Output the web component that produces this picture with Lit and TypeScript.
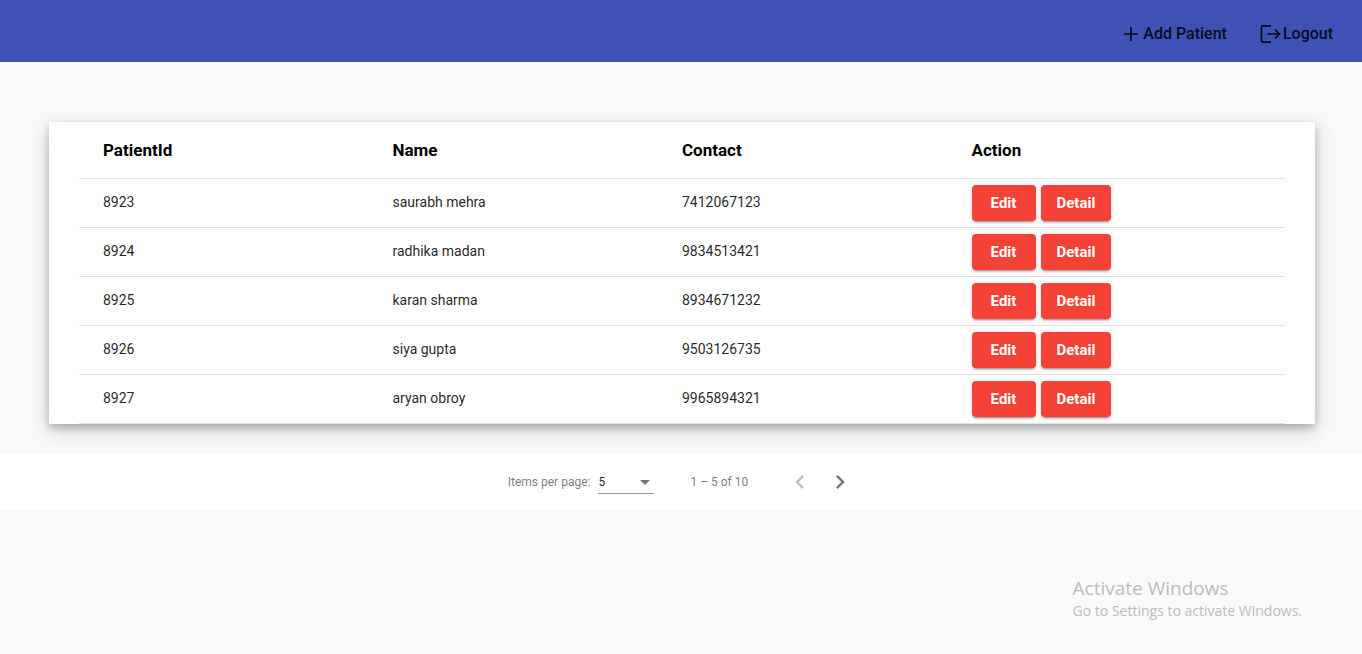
import { LitElement, html, css, svg } from "lit";
import { customElement, state } from "lit/decorators.js";

interface Patient {
  id: number;
  name: string;
  contact: string;
}

const PATIENTS: Patient[] = [
  { id: 8923, name: "saurabh mehra", contact: "7412067123" },
  { id: 8924, name: "radhika madan", contact: "9834513421" },
  { id: 8925, name: "karan sharma", contact: "8934671232" },
  { id: 8926, name: "siya gupta", contact: "9503126735" },
  { id: 8927, name: "aryan obroy", contact: "9965894321" },
];

const icon = (cls: string, box: string, body: unknown) =>
  html`<svg class=${cls} viewBox=${box} aria-hidden="true">${body}</svg>`;

@customElement("patient-toolbar")
export class PatientToolbar extends LitElement {
  static styles = css`
    :host {
      display: block;
    }
    .bar {
      display: flex;
      justify-content: flex-end;
      align-items: center;
      gap: 32px;
      height: 62px;
      padding: 6px 29px 0 16px;
      box-sizing: border-box;
      background: #3f51b5;
    }
    .item {
      display: flex;
      align-items: center;
      padding: 0;
      border: 0;
      background: none;
      color: rgba(0, 0, 0, 0.87);
      font: 500 16px/24px Roboto, sans-serif;
      cursor: pointer;
    }
    .icon {
      width: 24px;
      height: 24px;
      fill: none;
      stroke: currentColor;
      stroke-width: 1.7;
    }
  `;

  render() {
    return html`
      <header class="bar">
        <button class="item" type="button">
          ${icon("icon", "0 0 24 24", svg`<path d="M5 12h14M12 5v14" />`)}Add Patient
        </button>
        <button class="item" type="button">
          ${icon(
            "icon",
            "0 0 24 24",
            svg`<path d="M12 3.800H4Q2.500 3.800 2.500 5.300v13.400q0 1.500 1.500 1.500H12M8.500 12H20.500M16 7.500l4.500 4.500-4.500 4.500" />`
          )}Logout
        </button>
      </header>
    `;
  }
}

@customElement("patient-table")
export class PatientTable extends LitElement {
  static styles = css`
    :host {
      display: block;
      padding: 0 30px;
      background: #fff;
      box-shadow: 0 4px 8px 0 rgba(0, 0, 0, 0.2), 0 6px 20px 0 rgba(0, 0, 0, 0.19);
    }
    .table {
      width: 100%;
      table-layout: fixed;
      border-spacing: 0;
      font: 14px/20px Roboto, sans-serif;
      color: rgba(0, 0, 0, 0.87);
    }
    .cell,
    .head {
      box-sizing: border-box;
      padding: 0;
      border-bottom: 1px solid #e0e0e0;
      text-align: left;
    }
    .head {
      height: 57px;
      color: #000;
      font-size: 17px;
      font-weight: 700;
    }
    .cell {
      height: 49px;
      padding-bottom: 2px;
      font-weight: 400;
    }
    .cell.controls {
      padding-bottom: 0;
    }
    .edge {
      width: 24px;
    }
    .actions {
      display: flex;
      gap: 5px;
    }
    .button {
      min-width: 64px;
      height: 36px;
      padding: 0 16px;
      border: 0;
      border-radius: 4px;
      background: #f44336;
      color: #fff;
      font: 700 15px/36px Roboto, sans-serif;
      box-shadow: 0 3px 1px -2px rgba(0, 0, 0, 0.2), 0 2px 2px 0 rgba(0, 0, 0, 0.14),
        0 1px 5px 0 rgba(0, 0, 0, 0.12);
      cursor: pointer;
    }
  `;

  render() {
    return html`
      <table class="table">
        <colgroup>
          <col class="edge" />
          <col /><col /><col /><col />
          <col class="edge" />
        </colgroup>
        <thead>
          <tr>
            <td class="head"></td>
            ${["PatientId", "Name", "Contact", "Action"].map(
              (title) => html`<th class="head" scope="col">${title}</th>`
            )}
            <td class="head"></td>
          </tr>
        </thead>
        <tbody>
          ${PATIENTS.map(
            (p) => html`
              <tr>
                <td class="cell"></td>
                <td class="cell">${p.id}</td>
                <td class="cell">${p.name}</td>
                <td class="cell">${p.contact}</td>
                <td class="cell controls">
                  <div class="actions">
                    <button class="button" type="button">Edit</button>
                    <button class="button" type="button">Detail</button>
                  </div>
                </td>
                <td class="cell"></td>
              </tr>
            `
          )}
        </tbody>
      </table>
    `;
  }
}

@customElement("page-controls")
export class PageControls extends LitElement {
  @state() private size = "5";

  static styles = css`
    :host {
      display: block;
    }
    .pager {
      display: flex;
      justify-content: center;
      align-items: center;
      height: 56px;
      padding-left: 6px;
      background: #fff;
      color: rgba(0, 0, 0, 0.54);
      font: 12px/20px Roboto, sans-serif;
    }
    .size {
      display: grid;
      align-items: center;
      width: 56px;
      margin: 0 36px 0 8px;
      border-bottom: 1px solid rgba(0, 0, 0, 0.42);
      padding-top: 1px;
    }
    .select {
      grid-area: 1 / 1;
      width: 100%;
      height: 22px;
      padding: 0;
      border: 0;
      appearance: none;
      background: none;
      color: rgba(0, 0, 0, 0.87);
      font: 12px/22px Roboto, sans-serif;
    }
    .arrow {
      grid-area: 1 / 1;
      justify-self: end;
      width: 10px;
      height: 5px;
      margin-right: 4px;
      fill: currentColor;
      pointer-events: none;
    }
    .range {
      margin-right: 32px;
    }
    .step {
      display: grid;
      place-items: center;
      width: 40px;
      height: 40px;
      padding: 0;
      border: 0;
      background: none;
      color: rgba(0, 0, 0, 0.54);
    }
    .step:disabled {
      color: rgba(0, 0, 0, 0.26);
    }
    .chevron {
      width: 28px;
      height: 28px;
      fill: currentColor;
    }
  `;

  render() {
    return html`
      <nav class="pager" aria-label="Pages">
        <label for="size">Items per page:</label>
        <div class="size">
          <select
            class="select"
            id="size"
            .value=${this.size}
            @change=${(e: Event) => (this.size = (e.target as HTMLSelectElement).value)}
          >
            <option>5</option>
            <option>10</option>
          </select>
          ${icon("arrow", "0 0 10 5", svg`<path d="M0 0h10L5 5z" />`)}
        </div>
        <span class="range">1 – 5 of 10</span>
        <button class="step" type="button" aria-label="Previous page" disabled>
          ${icon("chevron", "0 0 24 24", svg`<path d="M15.410 7.410 14 6l-6 6 6 6 1.410-1.410L10.830 12z" />`)}
        </button>
        <button class="step" type="button" aria-label="Next page">
          ${icon("chevron", "0 0 24 24", svg`<path d="M10 6 8.590 7.410 13.170 12l-4.580 4.590L10 18l6-6z" />`)}
        </button>
      </nav>
    `;
  }
}

@customElement("app-root")
export class AppRoot extends LitElement {
  static styles = css`
    :host {
      display: block;
      position: relative;
      min-height: 100vh;
      background: #fafafa;
    }
    .card {
      margin: 60px 47px 30px 49px;
    }
    .notice {
      position: absolute;
      right: 60px;
      bottom: 33px;
      color: #bcbcbc;
      font: 14px/20px "Open Sans", sans-serif;
    }
    .title,
    .text {
      margin: 0;
    }
    .title {
      font-size: 19px;
      line-height: 26px;
      font-weight: 400;
    }
  `;

  render() {
    return html`
      <patient-toolbar></patient-toolbar>
      <main>
        <patient-table class="card"></patient-table>
        <page-controls></page-controls>
      </main>
      <aside class="notice">
        <p class="title">Activate Windows</p>
        <p class="text">Go to Settings to activate Windows.</p>
      </aside>
    `;
  }
}
